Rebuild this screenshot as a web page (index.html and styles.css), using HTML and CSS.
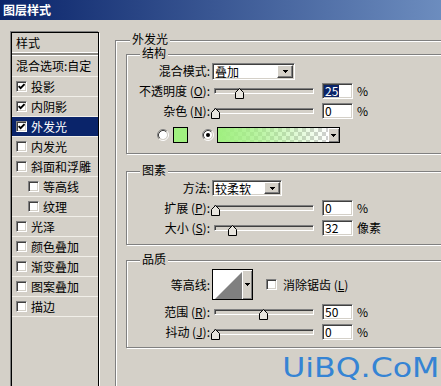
FILE: index.html
```html
<!DOCTYPE html>
<html lang="zh-CN">
<head>
<meta charset="utf-8">
<title>图层样式</title>
<link rel="stylesheet" href="styles.css">
</head>
<body>
<div class="window">
  <div class="titlebar"><span class="title">图层样式</span></div>
  <div class="client">
    <div class="style-list">
      <div class="list-head">样式</div>
      <div class="list-sep"></div>
      <div class="list-item blend">混合选项:自定</div>
      <div class="list-item"><span class="cb"><svg width="7" height="7" viewBox="0 0 7 7"><path d="M0.6 3.1 2.6 5.2 6.5 1.1" fill="none" stroke="#000" stroke-width="1.8"/></svg></span>投影</div>
      <div class="list-item"><span class="cb"><svg width="7" height="7" viewBox="0 0 7 7"><path d="M0.6 3.1 2.6 5.2 6.5 1.1" fill="none" stroke="#000" stroke-width="1.8"/></svg></span>内阴影</div>
      <div class="list-item selected"><span class="cb"><svg width="7" height="7" viewBox="0 0 7 7"><path d="M0.6 3.1 2.6 5.2 6.5 1.1" fill="none" stroke="#000" stroke-width="1.8"/></svg></span>外发光</div>
      <div class="list-item"><span class="cb"></span>内发光</div>
      <div class="list-item"><span class="cb"></span>斜面和浮雕</div>
      <div class="list-item indent"><span class="cb"></span>等高线</div>
      <div class="list-item indent"><span class="cb"></span>纹理</div>
      <div class="list-item"><span class="cb"></span>光泽</div>
      <div class="list-item"><span class="cb"></span>颜色叠加</div>
      <div class="list-item"><span class="cb"></span>渐变叠加</div>
      <div class="list-item"><span class="cb"></span>图案叠加</div>
      <div class="list-item last"><span class="cb"></span>描边</div>
    </div>

    <fieldset class="group outer">
      <legend>外发光</legend>

      <fieldset class="group sub structure">
        <legend>结构</legend>
        <div class="row first-s">
          <span class="label">混合模式:</span>
          <div class="select sunken blend-select">
            <span class="select-text">叠加</span>
            <span class="select-btn raised"><svg width="5" height="3" viewBox="0 0 5 3"><path d="M0 0h5v1h-1v1h-1v1h-1v-1h-1v-1h-1z" fill="#000"/></svg></span>
          </div>
        </div>
        <div class="row">
          <span class="label">不透明度 (<u>O</u>):</span>
          <div class="slider"><div class="track sunken"></div><svg class="thumb" style="left:21px" width="9" height="11" viewBox="0 0 9 11"><path d="M4.5 .5 8.5 4.5V10.5H.5V4.5Z" fill="#e8e5de" stroke="#000"/></svg></div>
          <div class="num sunken"><span class="hl">25</span></div>
          <span class="unit">%</span>
        </div>
        <div class="row">
          <span class="label">杂色 (<u>N</u>):</span>
          <div class="slider"><div class="track sunken"></div><svg class="thumb" style="left:-3px" width="9" height="11" viewBox="0 0 9 11"><path d="M4.5 .5 8.5 4.5V10.5H.5V4.5Z" fill="#e8e5de" stroke="#000"/></svg></div>
          <div class="num sunken"><span>0</span></div>
          <span class="unit">%</span>
        </div>
        <div class="row color-row">
          <svg class="radio" width="12" height="12" viewBox="0 0 12 12">
            <circle cx="6" cy="6" r="4" fill="#fff"/>
            <path d="M2.11 9.89A5.5 5.5 0 0 1 9.89 2.11" fill="none" stroke="#808080"/>
            <path d="M2.82 9.18A4.5 4.5 0 0 1 9.18 2.82" fill="none" stroke="#404040"/>
            <path d="M9.89 2.11A5.5 5.5 0 0 1 2.11 9.89" fill="none" stroke="#fff"/>
            <path d="M9.18 2.82A4.5 4.5 0 0 1 2.82 9.18" fill="none" stroke="#d4d0c8"/>
          </svg>
          <span class="swatch"></span>
          <svg class="radio second" width="12" height="12" viewBox="0 0 12 12">
            <circle cx="6" cy="6" r="4" fill="#fff"/>
            <path d="M2.11 9.89A5.5 5.5 0 0 1 9.89 2.11" fill="none" stroke="#808080"/>
            <path d="M2.82 9.18A4.5 4.5 0 0 1 9.18 2.82" fill="none" stroke="#404040"/>
            <path d="M9.89 2.11A5.5 5.5 0 0 1 2.11 9.89" fill="none" stroke="#fff"/>
            <path d="M9.18 2.82A4.5 4.5 0 0 1 2.82 9.18" fill="none" stroke="#d4d0c8"/>
            <circle cx="6" cy="6" r="2" fill="#000"/>
          </svg>
          <div class="grad-picker">
            <span class="grad"></span>
            <span class="picker-btn"><svg width="5" height="3" viewBox="0 0 5 3"><path d="M0 0h5v1h-1v1h-1v1h-1v-1h-1v-1h-1z" fill="#000"/></svg></span>
          </div>
        </div>
      </fieldset>

      <fieldset class="group sub elements">
        <legend>图素</legend>
        <div class="row first-e">
          <span class="label">方法:</span>
          <div class="select sunken method-select">
            <span class="select-text">较柔软</span>
            <span class="select-btn raised"><svg width="5" height="3" viewBox="0 0 5 3"><path d="M0 0h5v1h-1v1h-1v1h-1v-1h-1v-1h-1z" fill="#000"/></svg></span>
          </div>
        </div>
        <div class="row">
          <span class="label">扩展 (<u>P</u>):</span>
          <div class="slider"><div class="track sunken"></div><svg class="thumb" style="left:-3px" width="9" height="11" viewBox="0 0 9 11"><path d="M4.5 .5 8.5 4.5V10.5H.5V4.5Z" fill="#e8e5de" stroke="#000"/></svg></div>
          <div class="num sunken"><span>0</span></div>
          <span class="unit">%</span>
        </div>
        <div class="row">
          <span class="label">大小 (<u>S</u>):</span>
          <div class="slider"><div class="track sunken"></div><svg class="thumb" style="left:14px" width="9" height="11" viewBox="0 0 9 11"><path d="M4.5 .5 8.5 4.5V10.5H.5V4.5Z" fill="#e8e5de" stroke="#000"/></svg></div>
          <div class="num sunken"><span>32</span></div>
          <span class="unit">像素</span>
        </div>
      </fieldset>

      <fieldset class="group sub quality">
        <legend>品质</legend>
        <div class="row contour-row">
          <span class="label">等高线:</span>
          <div class="contour-picker">
            <span class="contour-preview"><svg width="29" height="29" viewBox="0 0 29 29"><path d="M2 29 29 2V29Z" fill="#808080"/></svg></span>
            <span class="picker-btn"><svg width="5" height="3" viewBox="0 0 5 3"><path d="M0 0h5v1h-1v1h-1v1h-1v-1h-1v-1h-1z" fill="#000"/></svg></span>
          </div>
          <span class="cb aa"></span><span>消除锯齿 (<u>L</u>)</span>
        </div>
        <div class="row after-contour">
          <span class="label">范围 (<u>R</u>):</span>
          <div class="slider"><div class="track sunken"></div><svg class="thumb" style="left:45px" width="9" height="11" viewBox="0 0 9 11"><path d="M4.5 .5 8.5 4.5V10.5H.5V4.5Z" fill="#e8e5de" stroke="#000"/></svg></div>
          <div class="num sunken"><span>50</span></div>
          <span class="unit">%</span>
        </div>
        <div class="row">
          <span class="label">抖动 (<u>J</u>):</span>
          <div class="slider"><div class="track sunken"></div><svg class="thumb" style="left:-3px" width="9" height="11" viewBox="0 0 9 11"><path d="M4.5 .5 8.5 4.5V10.5H.5V4.5Z" fill="#e8e5de" stroke="#000"/></svg></div>
          <div class="num sunken"><span>0</span></div>
          <span class="unit">%</span>
        </div>
      </fieldset>
    </fieldset>
  </div>
  <div class="watermark">UiBQ.CoM</div>
</div>
</body>
</html>
```

FILE: styles.css
```css
* { box-sizing: border-box; }
html, body { margin: 0; padding: 0; overflow: hidden; }
body {
  width: 441px;
  height: 386px;
  background: #d4d0c8;
  font-family: "Noto Sans CJK SC", "Noto Sans", sans-serif;
  font-size: 12px;
  line-height: 14px;
  color: #000;
}
.window { position: relative; width: 441px; height: 386px; overflow: hidden; }

.titlebar {
  height: 20px;
  display: flex;
  align-items: center;
  padding-left: 3px;
  background: linear-gradient(90deg, #0a246a 0, #a6caf0 700px);
}
.title { color: #fff; font-weight: 700; line-height: 12px; }

.client { display: flex; align-items: flex-start; padding-left: 11px; }

/* left style list */
.style-list {
  flex: none;
  width: 88px;
  height: 380px;
  margin-top: 12px;
  border: 1px solid #000;
  box-shadow: -1px -1px 0 #808080, 1px 1px 0 #fff;
}
.list-head { height: 19px; line-height: 19px; padding-left: 4px; }
.list-sep { height: 4px; border-top: 1px solid #fff; border-bottom: 1px solid #fff; background: #8c8a84; }
.list-item {
  display: flex;
  align-items: center;
  height: 20px;
  border-top: 1px solid #f1efe9;
  padding-left: 4px;
  white-space: nowrap;
}
.list-item.blend { border-top: 0; }
.list-item.last { height: 21px; border-bottom: 1px solid #f1efe9; }
.list-item.selected { background: #0a246a; color: #fff; }
.list-item.indent { padding-left: 16px; }

.cb {
  flex: none;
  width: 11px;
  height: 11px;
  margin-right: 4px;
  background: #fff;
  border: 1px solid;
  border-color: #808080 #fff #fff #808080;
  box-shadow: inset 1px 1px 0 #404040, inset -1px -1px 0 #d4d0c8;
  display: flex;
  align-items: center;
  justify-content: center;
}
.cb svg { display: block; }

/* group boxes */
.group {
  margin: 0;
  padding: 0;
  min-width: 0;
  border: 1px solid #808080;
  box-shadow: inset 1px 1px 0 #fff, 1px 1px 0 #fff;
}
.group > legend {
  padding: 0 2px;
  height: 12px;
  line-height: 12px;
  font-family: "Liberation Sans", "Noto Sans CJK SC", sans-serif;
  background: #d4d0c8;
}
.outer { flex: none; width: 360px; height: 420px; margin-left: 16px; margin-top: 14px; }
.outer > legend { margin-left: 14px; }
.sub { width: 340px; margin-left: 10px; }
.sub > legend { margin-left: 13px; }
.structure { margin-top: 2px; padding-bottom: 8px; }
.elements { margin-top: 11px; padding-bottom: 6px; }
.quality { margin-top: 9px; padding-bottom: 5px; }

/* rows */
.row { display: flex; align-items: center; height: 20px; white-space: nowrap; }
.first-s { margin-top: 1px; }
.first-e { margin-top: 1px; }
.label { flex: none; width: 85px; padding-right: 2px; text-align: right; }

.sunken {
  border: 1px solid;
  border-color: #808080 #fff #fff #808080;
  box-shadow: inset 1px 1px 0 #404040, inset -1px -1px 0 #d4d0c8;
}
.raised {
  background: #d4d0c8;
  border: 1px solid;
  border-color: #fff #404040 #404040 #fff;
  box-shadow: inset -1px -1px 0 #808080;
}

/* dropdowns */
.select { flex: none; display: flex; background: #fff; padding: 1px; }
.blend-select { width: 83px; height: 17px; }
.method-select { width: 70px; height: 16px; }
.select-text { flex: 1; padding-left: 1px; line-height: 13px; }
.select-btn { flex: none; width: 16px; display: flex; align-items: center; justify-content: center; }
.select-btn svg, .picker-btn svg { display: block; }

/* sliders */
.slider { flex: none; position: relative; width: 100px; height: 20px; margin-left: 2px; }
.track { margin-top: 7px; height: 6px; background: #d4d0c8; }
.thumb { position: absolute; top: 7px; display: block; }

/* numeric boxes */
.num {
  flex: none;
  width: 31px;
  height: 16px;
  margin-left: 8px;
  background: #fff;
  padding: 1px 1px;
  display: flex;
  align-items: center;
  line-height: 12px;
}
.num span { padding: 0 1px; }
.num .hl { background: #0a246a; color: #fff; }
.unit { margin-left: 4px; }

/* colour row */
.color-row { margin-top: 4px; padding-left: 30px; }
.radio { flex: none; display: block; }
.radio.second { margin-left: 14px; }
.swatch { flex: none; width: 15px; height: 16px; margin-left: 4px; background: #a0f080; border: 1px solid #000; }
.grad-picker { flex: none; display: flex; width: 123px; height: 16px; margin-left: 3px; border: 1px solid #000; }
.grad {
  flex: 1;
  background:
    linear-gradient(90deg, #a0f080 0%, rgba(160, 240, 128, 0.75) 35%, rgba(160, 240, 128, 0) 100%),
    repeating-conic-gradient(#cfcfcf 0 25%, #fff 0 50%) 0 0 / 8px 8px;
}
.picker-btn {
  flex: none;
  width: 11px;
  display: flex;
  align-items: center;
  justify-content: center;
  background: #d4d0c8;
  box-shadow: inset 1px 1px 0 #fff, inset -1px -1px 0 #808080;
}

/* contour */
.contour-row { height: 31px; margin-top: 3px; }
.contour-picker { flex: none; display: flex; width: 41px; height: 31px; border: 1px solid #000; }
.contour-preview { flex: none; width: 29px; background: #fff; }
.contour-preview svg { display: block; }
.contour-picker .picker-btn { width: 10px; }
.cb.aa { margin-left: 13px; margin-right: 6px; }
.after-contour { margin-top: 2px; }

/* watermark */
.watermark {
  position: absolute;
  right: 2px;
  top: 354px;
  font-family: "DejaVu Sans", sans-serif;
  font-size: 27px;
  line-height: 27px;
  color: #3584d4;
  white-space: nowrap;
  transform: scaleX(1.17);
  transform-origin: right center;
}
```
